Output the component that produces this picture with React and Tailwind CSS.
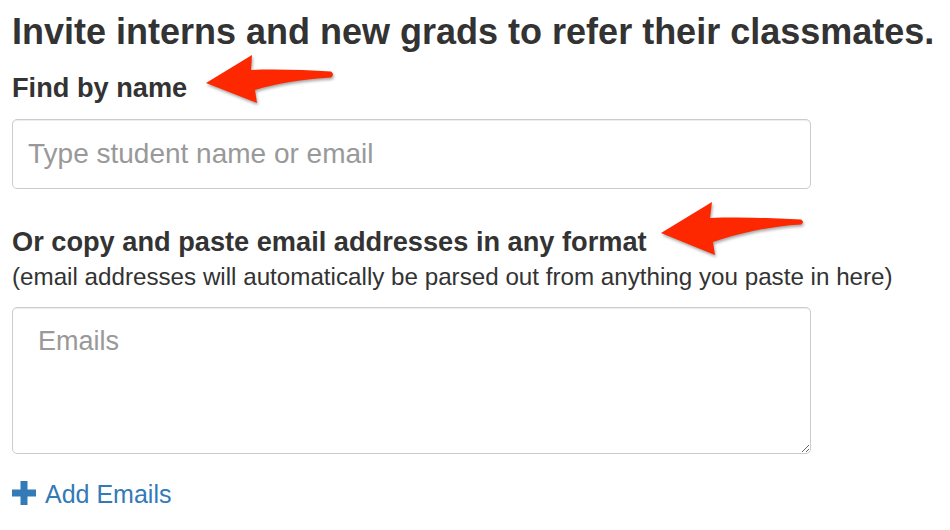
import React from 'react'

function Arrow({ className, d, w, h }) {
  return (
    <svg
      className={className}
      width={w}
      height={h}
      viewBox={`0 0 ${w} ${h}`}
      style={{ filter: 'drop-shadow(1px 2px 1.5px rgba(0,0,0,0.35))' }}
    >
      <path d={d} fill="#fe2800" />
    </svg>
  )
}

function PlusIcon() {
  return (
    <svg width="24" height="24" viewBox="0 0 24 24" className="shrink-0">
      <rect x="8.5" y="0" width="7" height="24" fill="#337ab7" />
      <rect x="0" y="8.5" width="24" height="7" fill="#337ab7" />
    </svg>
  )
}

export default function App() {
  return (
    <div className="relative min-h-[530px] w-[950px] bg-white px-[12px] text-[#333] font-['Liberation_Sans',Helvetica,Arial,sans-serif]">
      <h1 className="pt-[12px] text-[36px] leading-[40px] font-bold whitespace-nowrap">
        Invite interns and new grads to refer their classmates.
      </h1>

      <label className="mt-[20px] block text-[27.2px] leading-[32px] font-bold">Find by name</label>
      <input
        type="text"
        placeholder="Type student name or email"
        className="mt-[15px] block h-[70px] w-[799px] rounded-[5px] border border-[#ccc] bg-white pl-[15px] text-[28px] text-[#555] shadow-[inset_0_1px_1px_rgba(0,0,0,0.075)] outline-none placeholder:text-[#999]"
      />

      <label className="mt-[37px] block text-[27.2px] leading-[32px] font-bold whitespace-nowrap">
        Or copy and paste email addresses in any format
      </label>
      <p className="mt-[4px] text-[24.2px] leading-[30px] whitespace-nowrap">
        (email addresses will automatically be parsed out from anything you paste in here)
      </p>
      <textarea
        placeholder="Emails"
        className="mt-[15px] block h-[147px] w-[799px] rounded-[5px] border border-[#ccc] bg-white pt-[17px] pl-[25px] text-[27px] leading-[32px] text-[#555] shadow-[inset_0_1px_1px_rgba(0,0,0,0.075)] outline-none placeholder:text-[#999]"
      />

      <a href="#" className="mt-[25px] flex items-start gap-[9px] text-[25px] leading-[30px] text-[#337ab7]">
        <span className="mt-[2px]">
          <PlusIcon />
        </span>
        <span>Add Emails</span>
      </a>

      <Arrow
        className="absolute left-[200px] top-[50px]"
        w={140}
        h={60}
        d="M6 33 L52 5 L51 20 C76 19 106 20 131 21.5 Q135 24.5 131 27.5 C104 29 74 34 55 40 L57 53 Z"
      />
      <Arrow
        className="absolute left-[655px] top-[195px]"
        w={155}
        h={65}
        d="M6 38 L57 7 L55 23 C84 22 118 23 146 24.5 Q150 27 146 29.5 C116 31 82 39 58 47 L60 60 Z"
      />
    </div>
  )
}
